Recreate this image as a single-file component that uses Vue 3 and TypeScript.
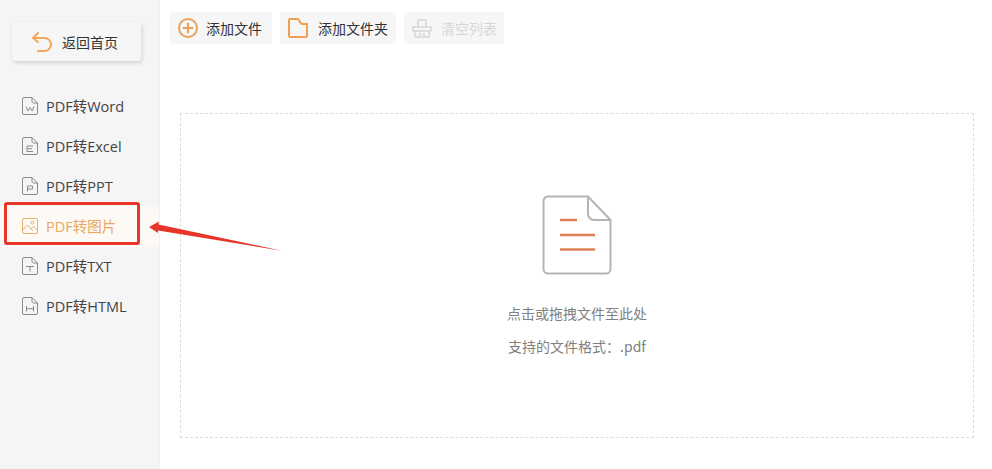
<template>
  <div class="page">
    <aside class="sidebar">
      <button class="back-btn">
        <svg width="22" height="22" viewBox="0 0 22 22" fill="none" stroke="#f0a85a" stroke-width="2" stroke-linecap="round" stroke-linejoin="round">
          <path d="M7 2 L2 7 L7 11" />
          <path d="M2 7 H13.5 A6.5 6.5 0 0 1 13.5 20 H7" />
        </svg>
        <span>返回首页</span>
      </button>
      <nav class="nav">
        <div v-for="item in navItems" :key="item.label" class="nav-item" :class="{ active: item.active }">
          <svg v-if="item.active" class="nav-icon" width="18" height="18" viewBox="0 0 18 18" fill="none" stroke="#e8b06e" stroke-width="1">
            <rect x="1.5" y="1.5" width="15" height="15" rx="1.5" />
            <path d="M1.5 13 L6.5 8 L12 14 M10 11.5 L12.5 9.5 L16.5 13.5" />
            <circle cx="11.5" cy="5.5" r="1.5" />
          </svg>
          <svg v-else class="nav-icon" width="18" height="18" viewBox="0 0 18 18" fill="none" stroke="#8a8a8a" stroke-width="1">
            <path d="M3 .5 H11 L16.500 6 V16 A1.500 1.500 0 0 1 15 17.500 H3 A1.500 1.500 0 0 1 1.500 16 V2 A1.500 1.500 0 0 1 3 .5 Z" />
            <path d="M11 .5 V4.500 A1.500 1.500 0 0 0 12.500 6 H16.500" />
            <path :d="item.glyph" />
          </svg>
          <span class="nav-label">{{ item.label }}</span>
        </div>
      </nav>
    </aside>

    <main class="content">
      <div class="toolbar">
        <button class="tool-btn add-file">
          <svg width="20" height="20" viewBox="0 0 20 20" fill="none" stroke="#e9a25c" stroke-width="2" stroke-linecap="round">
            <circle cx="10" cy="10" r="9" />
            <path d="M10 5.5 V14.5 M5.5 10 H14.5" />
          </svg>
          <span>添加文件</span>
        </button>
        <button class="tool-btn add-folder">
          <svg width="20" height="20" viewBox="0 0 20 20" fill="none" stroke="#f0a050" stroke-width="2" stroke-linejoin="round">
            <path d="M2 1 H10 L13.500 6 H19 V18 A1 1 0 0 1 18 19 H2 A1 1 0 0 1 1 18 V2 A1 1 0 0 1 2 1 Z" />
          </svg>
          <span>添加文件夹</span>
        </button>
        <button class="tool-btn clear" disabled>
          <svg width="20" height="20" viewBox="0 0 20 20" fill="none" stroke="#dedede" stroke-width="2">
            <path d="M6 9 V3 A1 1 0 0 1 7 2 H13 A1 1 0 0 1 14 3 V9" />
            <path d="M1 9 H19 V13 H1 Z M3 13 V19 H17 V13 M8 15 V19 M12 15 V19" />
          </svg>
          <span>清空列表</span>
        </button>
      </div>

      <div class="drop-zone">
        <svg class="doc-icon" width="70" height="80" viewBox="0 0 70 80" fill="none">
          <path d="M6 1.500 H46 L68.500 25 V74 A4.500 4.500 0 0 1 64 78.500 H6 A4.500 4.500 0 0 1 1.500 74 V6 A4.500 4.500 0 0 1 6 1.500 Z" stroke="#b5b5b5" stroke-width="2" stroke-linejoin="round" />
          <path d="M46 1.500 V19 A6 6 0 0 0 52 25 H68.500" stroke="#b5b5b5" stroke-width="2" />
          <path d="M18 25 H35 M18 40 H53 M18 54.500 H53" stroke="#e0805a" stroke-width="2.600" />
        </svg>
        <p class="hint first">点击或拖拽文件至此处</p>
        <p class="hint">支持的文件格式：.pdf</p>
      </div>
    </main>

    <!-- annotation drawn over the screenshot -->
    <div class="mark-box"></div>
    <svg class="mark-arrow" width="140" height="34" viewBox="0 0 140 34">
      <path d="M1 9 L11 3.500 L10.500 6.500 L135 33 L10 12.500 L10 15 Z" fill="#e8352a" />
    </svg>
  </div>
</template>

<script setup lang="ts">
interface NavItem {
  label: string
  glyph: string
  active?: boolean
}

const navItems: NavItem[] = [
  { label: 'PDF转Word', glyph: 'M5 9.500 L6.800 14 L9 10.500 L11.200 14 L13 9.500' },
  { label: 'PDF转Excel', glyph: 'M12 9 H6 V14.500 H12 M6 11.700 H11' },
  { label: 'PDF转PPT', glyph: 'M6.500 14.500 V9 H11.500 V12 H6.500' },
  { label: 'PDF转图片', glyph: '', active: true },
  { label: 'PDF转TXT', glyph: 'M5 9.500 H13 M9 9.500 V14.500' },
  { label: 'PDF转HTML', glyph: 'M5.500 9 V14.500 M12.500 9 V14.500 M5.500 11.700 H12.500' },
]
</script>

<style scoped>
.page {
  position: relative;
  display: flex;
  width: 992px;
  height: 469px;
  overflow: hidden;
  background: #fff;
  font-family: "Noto Sans CJK SC", "Liberation Sans", sans-serif;
}

.sidebar {
  width: 160px;
  flex-shrink: 0;
  padding-top: 22px;
  box-sizing: border-box;
  background: #f5f5f5;
  border-right: 1px solid #f0f0f0;
}

.back-btn {
  display: flex;
  align-items: center;
  gap: 9px;
  width: 129px;
  height: 39px;
  margin-left: 12px;
  padding: 0 0 0 19px;
  border: none;
  border-radius: 3px;
  background: #f6f6f6;
  box-shadow: 1px 2px 4px rgba(0, 0, 0, 0.14);
  font-family: inherit;
  font-size: 14px;
  color: #333;
}

.nav {
  margin-top: 26px;
}

.nav-item {
  display: flex;
  align-items: center;
  gap: 7px;
  height: 40px;
  padding-left: 21px;
  font-family: "Open Sans", "Noto Sans CJK SC", sans-serif;
  font-size: 14.500px;
  color: #444;
}

.nav-item.active {
  background: #fdf9f5;
  color: #e8a862;
}

.nav-icon {
  flex-shrink: 0;
  margin-top: -2px;
}

.nav-label {
  padding-bottom: 4px;
}

.content {
  flex: 1;
  display: flex;
  flex-direction: column;
  min-width: 0;
}

.toolbar {
  display: flex;
  gap: 8px;
  padding: 12px 0 0 10px;
}

.tool-btn {
  display: flex;
  align-items: center;
  gap: 8px;
  height: 32px;
  padding: 0 0 0 8px;
  border: none;
  border-radius: 4px;
  background: #f6f6f6;
  font-family: inherit;
  font-size: 14px;
  color: #333;
}

.add-file {
  width: 102px;
}

.add-folder {
  width: 116px;
  gap: 10px;
}

.clear {
  width: 100px;
  gap: 9px;
  color: #d6d6d6;
}

.drop-zone {
  display: flex;
  flex-direction: column;
  align-items: center;
  width: 794px;
  height: 325px;
  margin: 69px 0 0 20px;
  box-sizing: border-box;
  border: 1px dashed #dcdcdc;
}

.doc-icon {
  margin-top: 81px;
}

.hint {
  margin: 14px 0 0;
  font-size: 14px;
  line-height: 19px;
  color: #808080;
}

.hint.first {
  margin-top: 29px;
}

.mark-box {
  position: absolute;
  left: 4px;
  top: 202px;
  width: 136px;
  height: 43px;
  box-sizing: border-box;
  border: 3px solid #e8352a;
  border-radius: 3px;
}

.mark-arrow {
  position: absolute;
  left: 148px;
  top: 218px;
}
</style>
